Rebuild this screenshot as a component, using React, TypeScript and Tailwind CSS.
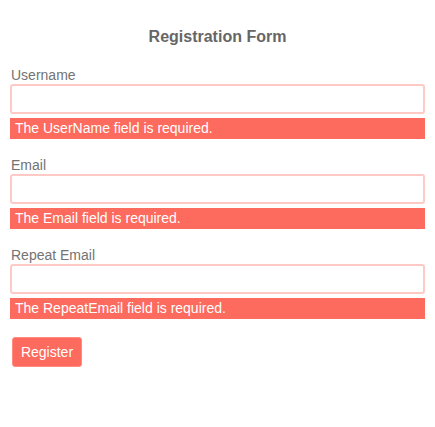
import React from "react";

const fields = [
  { label: "Username", error: "The UserName field is required." },
  { label: "Email", error: "The Email field is required." },
  { label: "Repeat Email", error: "The RepeatEmail field is required." },
];

const App = () => {
  return (
    <div className="min-h-screen bg-white px-[10px] pt-[27px] font-['Liberation_Sans',Arial,sans-serif]">
      <h1 className="text-center text-[16px] leading-[20px] font-bold text-[#666]">
        Registration Form
      </h1>
      <form className="mt-[20px] flex flex-col gap-[18px]" onSubmit={(e) => e.preventDefault()}>
        {fields.map((f) => (
          <div key={f.label}>
            <label className="block pl-px text-[14px] leading-[17px] text-[#737373]">{f.label}</label>
            <input
              type="text"
              className="block h-[30px] w-full rounded-[3px] border-2 border-[#ffcac5] bg-white px-2 outline-none"
            />
            <div className="mt-[4px] h-[21px] bg-[#fd6a5e] pl-[5px] text-[14px] leading-[21px] text-white">
              {f.error}
            </div>
          </div>
        ))}
        <div>
          <button
            type="submit"
            className="ml-[2px] h-[30px] w-[70px] rounded-[3px] border border-[#ff8a80] bg-[#fd6a5e] text-[14px] text-white"
          >
            Register
          </button>
        </div>
      </form>
    </div>
  );
};

export default App;
